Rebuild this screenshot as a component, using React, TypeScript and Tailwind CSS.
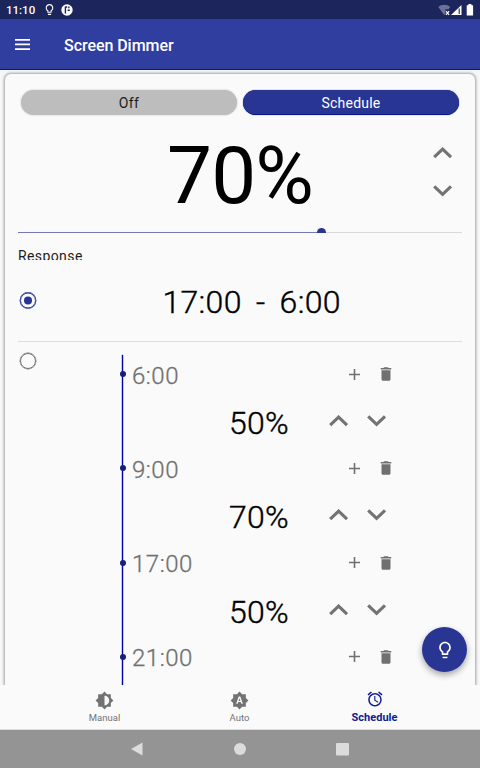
import React from "react";
import {
  MdAdd,
  MdAlarm,
  MdBrightness6,
  MdBrightnessAuto,
  MdDelete,
  MdLightbulbOutline,
} from "react-icons/md";

interface Slot {
  time: string;
  level?: string;
}

const slots: Slot[] = [
  { time: "6:00", level: "50%" },
  { time: "9:00", level: "70%" },
  { time: "17:00", level: "50%" },
  { time: "21:00" },
];

const Chevron: React.FC<{ down?: boolean }> = ({ down }) => (
  <svg width="20" height="12" viewBox="0 0 20 12" fill="none" stroke="#737373" strokeWidth="3.1">
    <path d={down ? "M1.2 1.3 9.6 9.4 18 1.3" : "M1.2 10.2 9.6 2.1 18 10.2"} />
  </svg>
);

const StatusBar: React.FC = () => (
  <div className="flex h-[19px] shrink-0 items-center bg-[#1c265c] pl-[6px] pr-[6px] text-white">
    <span className="w-[37px] pt-[2px] text-[11.5px] font-medium leading-[17px]">11:10</span>
    <MdLightbulbOutline className="h-[13px] w-[13px]" />
    <svg className="ml-[5px]" width="12" height="12" viewBox="0 0 12 12">
      <circle cx="6" cy="6" r="5.7" fill="#fff" />
      <path d="M4.4 2.6v7M4.4 3h1.8M7.8 2.6v1.6M6.6 6.2h2.2" fill="none" stroke="#1c265c" strokeWidth="1.4" />
    </svg>
    <svg className="ml-auto" width="36" height="12" viewBox="0 0 36 12">
      <path d="M.3 3C3.5.1 9 .1 12.2 3L10.5 5.2H7.4V10L6.2 11z" fill="#6c7297" />
      <path d="m8 7.1 3.1 3.8M11.1 7.1 8 10.9" stroke="#fff" strokeWidth="1.2" />
      <path d="M13 11 23.5 1V11z" fill="#fff" />
      <path d="M21.2 4.5v5.5" stroke="#1c265c" strokeWidth="1.1" />
      <path d="M30.4 0h3v1.2h1.7V11.4h-6.4V1.2h1.7z" fill="#fff" />
    </svg>
  </div>
);

const SlotRow: React.FC<{ slot: Slot }> = ({ slot }) => (
  <div className="h-[94.3px] shrink-0">
    <div className="flex h-[38px] items-center text-[#707070]">
      <span className="-ml-[2.5px] h-[6px] w-[6px] rounded-full bg-[#151f78]" />
      <span className="ml-[6.5px] mt-[3px] w-[213px] text-[24px] font-light leading-[38px] tracking-[0.5px] [-webkit-text-stroke:0.3px_#707070]">
        {slot.time}
      </span>
      <MdAdd className="h-[19px] w-[19px]" />
      <MdDelete className="ml-[13px] h-[18px] w-[18px]" />
    </div>
    {slot.level && (
      <div className="flex h-[56px] items-center pl-[107px]">
        <span className="mt-[4px] w-[100px] text-[32px] font-light leading-[56px] tracking-[0.2px] [-webkit-text-stroke:0.4px_black]">
          {slot.level}
        </span>
        <Chevron />
        <span className="w-[18px]" />
        <Chevron down />
      </div>
    )}
  </div>
);

const App: React.FC = () => {
  return (
    <div className="relative flex h-[768px] w-[480px] flex-col overflow-hidden bg-[#f8f8f8] font-['Roboto',sans-serif] text-black">
      <StatusBar />
      <header className="flex h-[51px] shrink-0 items-center border-b border-[#06158a] bg-[#303e9f] text-white">
        <svg className="ml-[15px]" width="15" height="11" viewBox="0 0 15 11" fill="#fff">
          <path d="M0 0h15v1.7H0zM0 4.6h15v1.7H0zM0 9.2h15v1.7H0z" />
        </svg>
        <h1 className="ml-[34px] mt-[4px] text-[16px] font-medium tracking-[-0.05px]">Screen Dimmer</h1>
      </header>

      <main className="h-[615px] shrink-0 overflow-hidden px-[5px] pt-[4px]">
        <section className="h-[640px] rounded-[6px] bg-[#fafafa] shadow-[0_0_3px_0.5px_#a0a0a0]">
          <div className="flex gap-[6px] pl-[16px] pt-[16px] text-[14px] leading-[25px]">
            <button className="h-[25px] w-[216px] rounded-full bg-[#bdbdbd] pt-px tracking-[0.3px] text-[#1c1c1c] shadow-[0_0_2px_#bdbdbd]">
              Off
            </button>
            <button className="h-[25px] w-[216px] rounded-full border-b border-[#06158a] bg-[#283593] pt-px tracking-[0.2px] text-white shadow-[0_0_1px_#06158a]">
              Schedule
            </button>
          </div>

          <div className="flex h-[112px] pl-[162px]">
            <div className="h-[112px] w-[266px] pt-[5px] text-[80px] leading-[112px] tracking-[-0.8px]">70%</div>
            <div className="flex flex-col gap-[26px] pt-[32px]">
              <Chevron />
              <Chevron down />
            </div>
          </div>

          {/* the thumb is cut off by the collapsed slider row */}
          <div className="ml-[13px] flex h-[6px] w-[444px] items-end overflow-hidden">
            <span className="h-px w-[299px] bg-[#7479b8]" />
            <span className="h-[5px] w-[9px] rounded-t-full bg-[#283593]" />
            <span className="h-px flex-1 bg-[#dadada]" />
          </div>

          <div className="ml-[13px] h-[27px] overflow-hidden pt-[14px] text-[14px] leading-[18px] tracking-[0.4px] text-[#1c1c1c]">
            Response
          </div>

          <div className="mx-[13px] flex h-[82px] items-center border-b border-[#dddddd]">
            <span className="ml-[1.5px] flex h-[16px] w-[16px] -translate-y-[0.5px] items-center justify-center rounded-full border-[1.5px] border-[#1a2799] ring-[0.4px] ring-[#1a2799]">
              <span className="h-[8px] w-[8px] rounded-full bg-[#283593]" />
            </span>
            <span className="ml-[127px] mt-[2px] whitespace-pre text-[32px] font-light tracking-[0.3px] [-webkit-text-stroke:0.4px_black] [word-spacing:-1px]">
              17:00  -  6:00
            </span>
          </div>

          <div className="flex pl-[14.5px] pt-[12px]">
            <span className="h-[16px] w-[16px] -translate-y-px rounded-full border-[1.5px] border-[#707070] ring-[0.4px] ring-[#707070]" />
            <div className="ml-[86.5px] mt-px flex h-[332px] w-px flex-col">
              <div className="flex">
                <span className="h-[332px] w-px shrink-0 bg-[#0000aa] ring-[0.2px] ring-[#0000aa]" />
                <div className="-ml-px w-[330px] shrink-0">
                  {slots.map((slot) => (
                    <SlotRow key={slot.time} slot={slot} />
                  ))}
                </div>
              </div>
            </div>
          </div>
        </section>
      </main>

      <button className="absolute left-[422px] top-[627px] flex h-[45px] w-[45px] items-center justify-center rounded-full bg-[#283593] text-white shadow-[0_3px_6px_rgba(0,0,0,0.35)]">
        <MdLightbulbOutline className="h-[20px] w-[20px]" />
      </button>

      <nav className="flex h-[45px] shrink-0 border-b border-[#e0e0e0] bg-[#fafafa] pl-[37px] text-[#737373]">
        <div className="flex w-[135px] flex-col items-center pt-[6px] text-[9.5px] leading-[13px]">
          <MdBrightness6 className="mb-px h-[19px] w-[19px]" />
          Manual
        </div>
        <div className="flex w-[135px] flex-col items-center pt-[6px] text-[9.5px] leading-[13px]">
          <MdBrightnessAuto className="mb-px h-[19px] w-[19px]" />
          Auto
        </div>
        <div className="flex w-[135px] flex-col items-center pt-[5px] text-[11px] font-bold leading-[14px] text-[#0d1a94]">
          <MdAlarm className="mb-[3px] h-[18px] w-[18px]" />
          Schedule
        </div>
      </nav>

      <div className="flex h-[38px] shrink-0 items-center bg-[#949494] pl-[131px]">
        <svg width="220" height="16" viewBox="0 0 220 16" fill="#dcdcdc">
          <path d="M0 8 11.5 1.5v13z" />
          <circle cx="109" cy="8" r="6" />
          <rect x="205" y="2" width="13" height="12.5" rx="1" />
        </svg>
      </div>
    </div>
  );
};

export default App;
